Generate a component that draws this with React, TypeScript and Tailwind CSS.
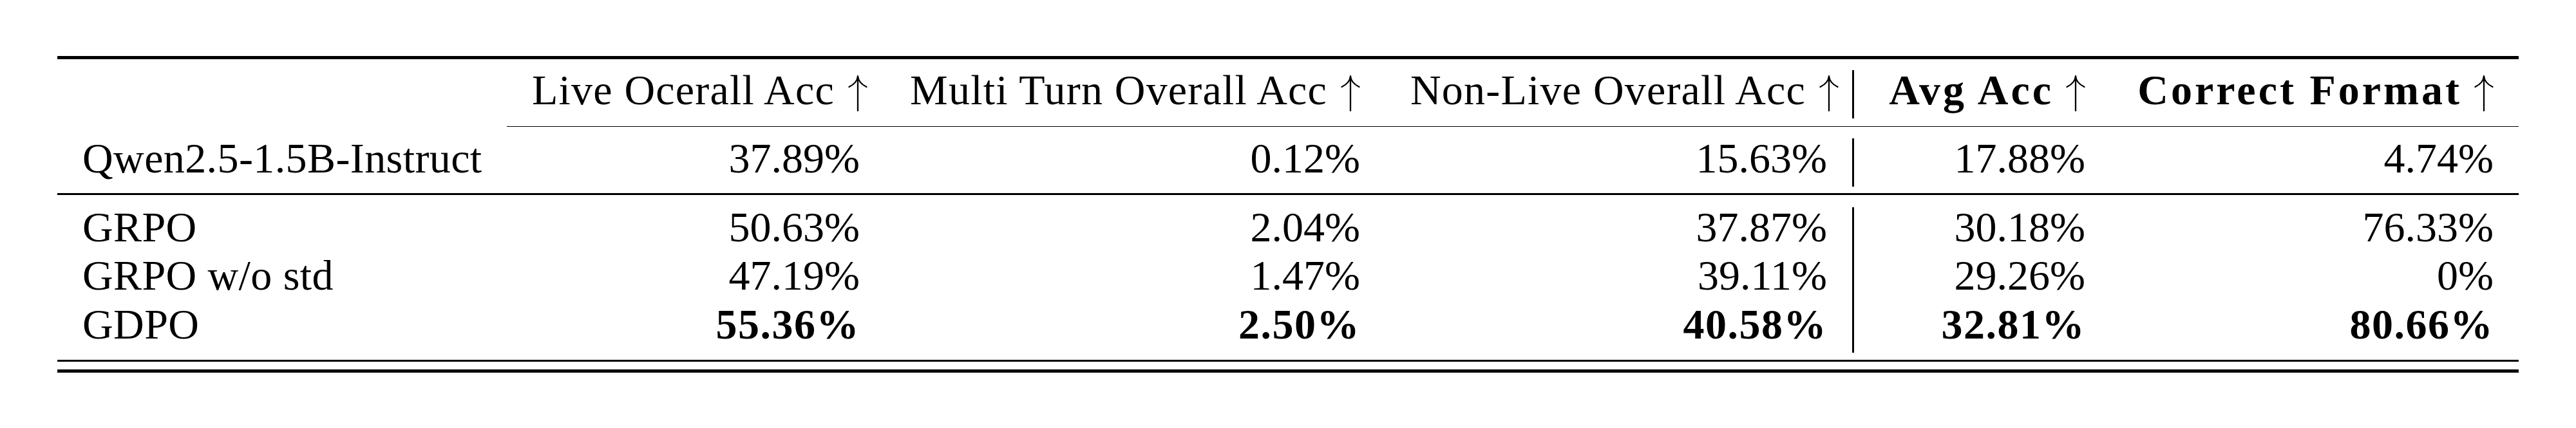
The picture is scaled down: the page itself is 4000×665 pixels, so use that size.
import type { ReactNode } from "react";

type Cell = { text: ReactNode; bold?: boolean };

// column widths (px), the bar sits between col 4 and col 5
const widths = [
  "w-[698px]",
  "w-[587px]",
  "w-[777px]",
  "w-[725px]",
  "w-[398px]",
  "w-[634px]",
];

const Arrow = ({ gap = "ml-[22px]" }: { gap?: string }) => (
  <svg
    viewBox="0 0 30 56"
    className={`${gap} inline-block h-[56px] w-[30px] align-[-11px]`}
    fill="none"
    stroke="black"
    strokeWidth={2.3}
    strokeLinecap="round"
  >
    <path d="M15 3 V55" />
    <path d="M15 1.5 Q14 12 1.5 18" />
    <path d="M15 1.5 Q16 12 28.5 18" />
  </svg>
);

const Row = ({ cells, height }: { cells: Cell[]; height: string }) => (
  <div className={`flex ${height}`}>
    {cells.map((c, i) => (
      <div key={i} className="contents">
        {i === 4 && <div className="w-[3px] shrink-0 bg-black" />}
        <div
          className={`${widths[i]} shrink-0 whitespace-nowrap px-[39px] leading-[61px] ${
            i === 0 ? "text-left tracking-[0.4px]" : "text-right"
          } ${c.bold ? "font-bold tracking-[1.5px]" : "font-normal"}`}
        >
          {c.text}
        </div>
      </div>
    ))}
  </div>
);

const Rule = ({ className }: { className: string }) => (
  <div className={`w-full bg-black ${className}`} />
);

const Head = ({ label }: { label: string }) => (
  <>
    <span className="tracking-[1.2px]">{label}</span>
    <Arrow gap="ml-[21px]" />
  </>
);

const BoldHead = ({ label }: { label: string }) => (
  <>
    <span className="font-bold tracking-[4px]">{label}</span>
    <Arrow gap="ml-[19px]" />
  </>
);

const header: Cell[] = [
  { text: "" },
  { text: <Head label="Live Ocerall Acc" /> },
  { text: <Head label="Multi Turn Overall Acc" /> },
  { text: <Head label="Non-Live Overall Acc" /> },
  { text: <BoldHead label="Avg Acc" /> },
  { text: <BoldHead label="Correct Format" /> },
];

const base: Cell[] = [
  { text: "Qwen2.5-1.5B-Instruct" },
  { text: "37.89%" },
  { text: "0.12%" },
  { text: "15.63%" },
  { text: "17.88%" },
  { text: "4.74%" },
];

const methods: Cell[][] = [
  [
    { text: "GRPO" },
    { text: "50.63%" },
    { text: "2.04%" },
    { text: "37.87%" },
    { text: "30.18%" },
    { text: "76.33%" },
  ],
  [
    { text: "GRPO w/o std" },
    { text: "47.19%" },
    { text: "1.47%" },
    { text: "39.11%" },
    { text: "29.26%" },
    { text: "0%" },
  ],
  [
    { text: "GDPO" },
    { text: "55.36%", bold: true },
    { text: "2.50%", bold: true },
    { text: "40.58%", bold: true },
    { text: "32.81%", bold: true },
    { text: "80.66%", bold: true },
  ],
];

export default function App() {
  return (
    <div className="h-[665px] w-[4000px] bg-white font-['Liberation_Serif',serif] text-[66px] text-black">
      <div className="ml-[89px] w-[3822px] pt-[87px]">
        <Rule className="h-[5px]" />
        <div className="mt-[17px]">
          <Row cells={header} height="h-[75px]" />
        </div>
        {/* cmidrule over the value columns */}
        <div className="mt-[12px] flex">
          <div className="w-[698px] shrink-0" />
          <div className="h-px flex-1 bg-black" />
        </div>
        <div className="mt-[18px]">
          <Row cells={base} height="h-[75px]" />
        </div>
        <Rule className="mt-[10px] h-[3px]" />
        <div className="mt-[19px] flex flex-col">
          <Row cells={methods[0]} height="h-[75px]" />
          <Row cells={methods[1]} height="h-[76px]" />
          <Row cells={methods[2]} height="h-[75px]" />
        </div>
        <Rule className="mt-[11px] h-[3px]" />
        <Rule className="mt-[12px] h-[5px]" />
      </div>
    </div>
  );
}
